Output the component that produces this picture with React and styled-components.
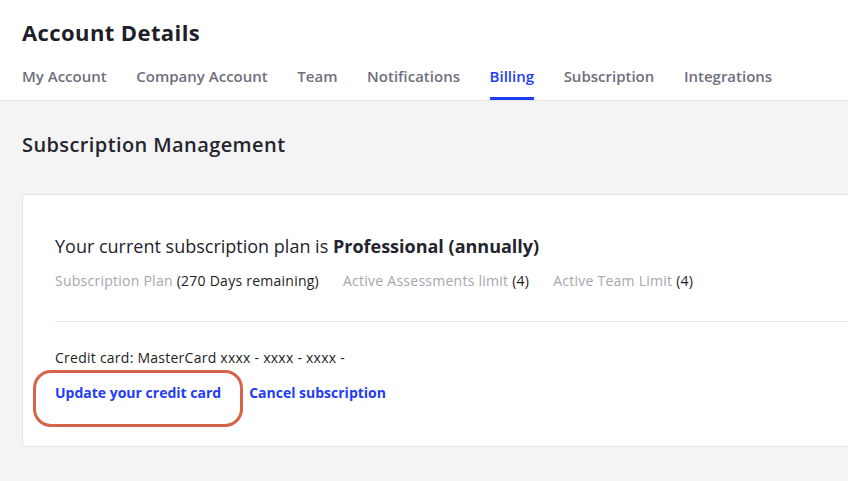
import React from "react";
import styled, { createGlobalStyle } from "styled-components";

const GlobalStyle = createGlobalStyle`
  html, body {
    margin: 0;
    padding: 0;
    background: #f4f4f4;
    font-family: "Open Sans", "Noto Sans", sans-serif;
    overflow: hidden;
  }
`;

const Page = styled.div`
  width: 848px;
  height: 481px;
  overflow: hidden;
  background: #f4f4f4;
`;

const Header = styled.header`
  background: #fff;
  border-bottom: 1px solid #e6e6e6;
  padding: 18px 22px 0;
`;

const Title = styled.h1`
  margin: 0;
  font-size: 22px;
  line-height: 28px;
  font-weight: 700;
  letter-spacing: 0.4px;
  color: #1e1e28;
`;

const Tabs = styled.nav`
  display: flex;
  gap: 29.6px;
  margin-top: 19px;
`;

const Tab = styled.a`
  display: block;
  font-size: 15px;
  font-weight: 600;
  line-height: 22px;
  padding-bottom: 10px;
  color: ${({ $active }) => ($active ? "#1f3cf6" : "#6f6f7d")};
  border-bottom: 3px solid ${({ $active }) => ($active ? "#1f3cf6" : "transparent")};
  white-space: nowrap;
  cursor: pointer;
`;

const Main = styled.main`
  padding: 30px 0 0 22px;
`;

const SectionTitle = styled.h2`
  margin: 0;
  font-size: 20px;
  line-height: 28px;
  font-weight: 600;
  letter-spacing: 0.4px;
  color: #25252f;
`;

const Card = styled.section`
  position: relative;
  margin-top: 35px;
  width: 900px;
  height: 253px;
  box-sizing: border-box;
  background: #fff;
  border: 1px solid #e4e4e4;
  border-radius: 3px;
  padding: 38px 0 0 32px;
`;

const PlanLine = styled.p`
  margin: 0;
  font-size: 18px;
  line-height: 26px;
  color: #24242e;

  strong {
    font-weight: 700;
  }
`;

const Meta = styled.div`
  display: flex;
  gap: 24px;
  margin-top: 12px;
  font-size: 14px;
  line-height: 20px;
  letter-spacing: 0.25px;
  color: #222;
`;

const MetaLabel = styled.span`
  color: #a6a6ae;
`;

const Divider = styled.hr`
  margin: 30px 0 0;
  border: 0;
  border-top: 1px solid #e8e8e8;
`;

const CardLine = styled.p`
  margin: 26px 0 0;
  font-size: 14px;
  line-height: 20px;
  letter-spacing: 0.25px;
  color: #222;
`;

const Links = styled.div`
  display: flex;
  gap: 28px;
  margin-top: 15px;
`;

const LinkButton = styled.a`
  font-size: 14px;
  line-height: 20px;
  font-weight: 700;
  color: #1f3cf6;
  cursor: pointer;
`;

const Highlight = styled.div`
  position: absolute;
  left: 10px;
  top: 175px;
  width: 210px;
  height: 57px;
  box-sizing: border-box;
  border: 3px solid #d6644a;
  border-radius: 18px;
  pointer-events: none;
`;

const tabs = [
  "My Account",
  "Company Account",
  "Team",
  "Notifications",
  "Billing",
  "Subscription",
  "Integrations",
];

export default function App() {
  return (
    <Page>
      <GlobalStyle />
      <Header>
        <Title>Account Details</Title>
        <Tabs>
          {tabs.map((t) => (
            <Tab key={t} $active={t === "Billing"}>
              {t}
            </Tab>
          ))}
        </Tabs>
      </Header>
      <Main>
        <SectionTitle>Subscription Management</SectionTitle>
        <Card>
          <PlanLine>
            Your current subscription plan is <strong>Professional (annually)</strong>
          </PlanLine>
          <Meta>
            <span>
              <MetaLabel>Subscription Plan</MetaLabel> (270 Days remaining)
            </span>
            <span>
              <MetaLabel>Active Assessments limit</MetaLabel> (4)
            </span>
            <span>
              <MetaLabel>Active Team Limit</MetaLabel> (4)
            </span>
          </Meta>
          <Divider />
          <CardLine>Credit card: MasterCard xxxx - xxxx - xxxx -</CardLine>
          <Links>
            <LinkButton>Update your credit card</LinkButton>
            <LinkButton>Cancel subscription</LinkButton>
          </Links>
          <Highlight />
        </Card>
      </Main>
    </Page>
  );
}
